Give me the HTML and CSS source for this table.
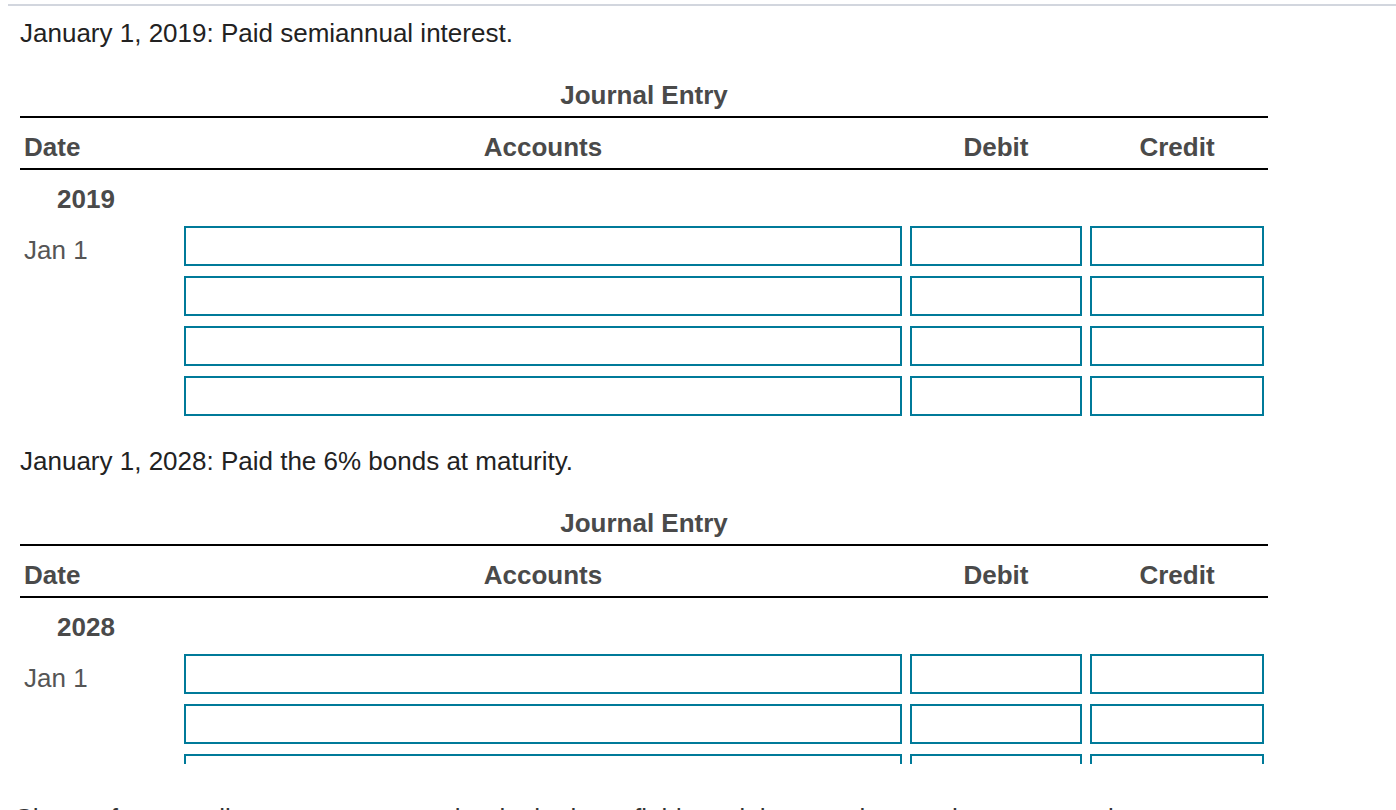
FILE: index.html
```html
<!DOCTYPE html>
<html lang="en">
<head>
<meta charset="utf-8">
<title>Journal Entry</title>
<link rel="stylesheet" href="styles.css">
</head>
<body>
<div class="frame">
  <div class="viewport">
    <section class="entry">
      <p class="prompt">January 1, 2019: Paid semiannual interest.</p>
      <div class="journal">
        <div class="caption">Journal Entry</div>
        <div class="row head">
          <div class="date">Date</div>
          <div>Accounts</div>
          <div>Debit</div>
          <div>Credit</div>
        </div>
        <div class="row year"><div class="date">2019</div></div>
        <div class="row line">
          <div class="date">Jan 1</div>
          <input class="field" type="text" aria-label="Account">
          <input class="field" type="text" aria-label="Debit">
          <input class="field" type="text" aria-label="Credit">
        </div>
        <div class="row line">
          <div class="date"></div>
          <input class="field" type="text" aria-label="Account">
          <input class="field" type="text" aria-label="Debit">
          <input class="field" type="text" aria-label="Credit">
        </div>
        <div class="row line">
          <div class="date"></div>
          <input class="field" type="text" aria-label="Account">
          <input class="field" type="text" aria-label="Debit">
          <input class="field" type="text" aria-label="Credit">
        </div>
        <div class="row line">
          <div class="date"></div>
          <input class="field" type="text" aria-label="Account">
          <input class="field" type="text" aria-label="Debit">
          <input class="field" type="text" aria-label="Credit">
        </div>
      </div>
    </section>
    <section class="entry">
      <p class="prompt">January 1, 2028: Paid the 6% bonds at maturity.</p>
      <div class="journal">
        <div class="caption">Journal Entry</div>
        <div class="row head">
          <div class="date">Date</div>
          <div>Accounts</div>
          <div>Debit</div>
          <div>Credit</div>
        </div>
        <div class="row year"><div class="date">2028</div></div>
        <div class="row line">
          <div class="date">Jan 1</div>
          <input class="field" type="text" aria-label="Account">
          <input class="field" type="text" aria-label="Debit">
          <input class="field" type="text" aria-label="Credit">
        </div>
        <div class="row line">
          <div class="date"></div>
          <input class="field" type="text" aria-label="Account">
          <input class="field" type="text" aria-label="Debit">
          <input class="field" type="text" aria-label="Credit">
        </div>
        <div class="row line">
          <div class="date"></div>
          <input class="field" type="text" aria-label="Account">
          <input class="field" type="text" aria-label="Debit">
          <input class="field" type="text" aria-label="Credit">
        </div>
        <div class="row line">
          <div class="date"></div>
          <input class="field" type="text" aria-label="Account">
          <input class="field" type="text" aria-label="Debit">
          <input class="field" type="text" aria-label="Credit">
        </div>
      </div>
    </section>
  </div>
  <p class="note">Choose from any list or enter any number in the input fields and then continue to the next question.</p>
</div>
</body>
</html>
```

FILE: styles.css
```css
html, body {
  margin: 0;
  padding: 0;
  background: #ffffff;
}

body {
  font-family: "Liberation Sans", Arial, Helvetica, sans-serif;
  font-size: 26px;
  line-height: 30px;
  color: #222222;
  overflow: hidden;
}

.frame {
  margin: 4px 0 0 8px;
  border-top: 2px solid #d2d6de;
}

.viewport {
  height: 758px;
  overflow: hidden;
  padding-left: 12px;
}

.entry {
  padding-top: 12px;
}

.entry + .entry {
  padding-top: 20px;
}

.prompt {
  margin: 0;
  color: #222222;
}

.journal {
  width: 1248px;
  margin-top: 32px;
}

.caption {
  text-align: center;
  font-weight: bold;
  color: #4a4a4a;
  margin-bottom: 6px;
}

.row {
  display: grid;
  grid-template-columns: 156px 718px 172px 174px;
  column-gap: 8px;
  padding-right: 4px;
}

.head {
  border-top: 2px solid #000000;
  border-bottom: 2px solid #000000;
  padding: 14px 4px 6px 0;
}

.head > div {
  font-weight: bold;
  color: #4a4a4a;
  text-align: center;
}

.head > .date {
  text-align: left;
  padding-left: 4px;
}

.year {
  padding-top: 14px;
  padding-bottom: 12px;
}

.year > .date {
  font-weight: bold;
  color: #4a4a4a;
  padding-left: 37px;
}

.line {
  height: 50px;
}

.line > .date {
  color: #555555;
  padding: 9px 0 0 4px;
}

.field {
  box-sizing: border-box;
  width: 100%;
  height: 40px;
  margin: 0;
  padding: 0 8px;
  border: 2px solid #007a99;
  border-radius: 0;
  background: #ffffff;
  font: inherit;
  outline: none;
}

.note {
  margin: 39px 0 0 6px;
  color: #333333;
  white-space: nowrap;
}
```
